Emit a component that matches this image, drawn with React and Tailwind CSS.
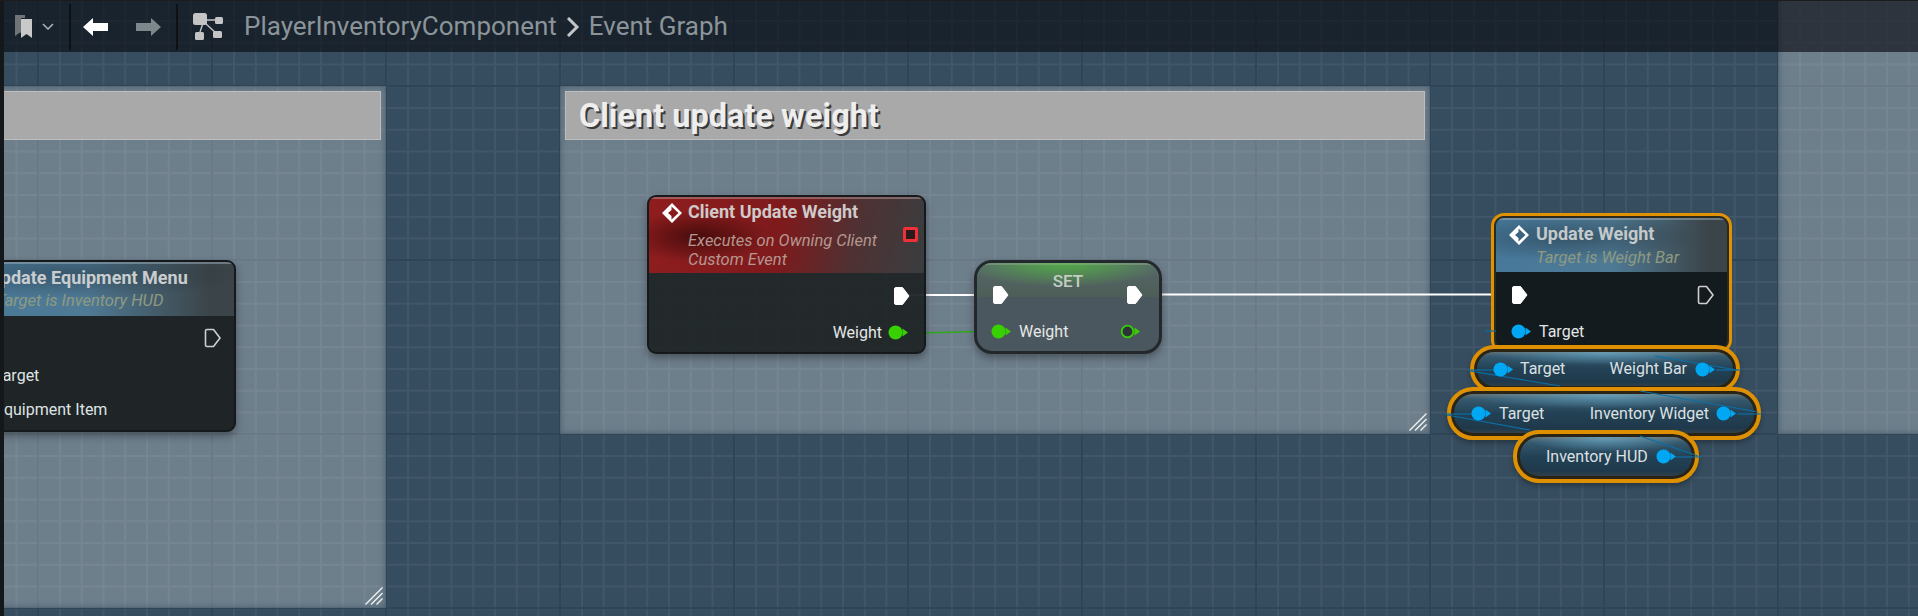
import React from 'react';

// Blueprint graph editor: toolbar over a free canvas of comment boxes and nodes

function ExecPin({ hollow = false }) {
    return (
        <svg width="17" height="20" viewBox="0 0 17 20" className="shrink-0 relative z-[6]">
            <path
                d="M3 1.5H9.500L16 10L9.500 18.5H3Q1.5 18.5 1.5 17V3Q1.5 1.5 3 1.5Z"
                fill={hollow ? 'none' : '#ffffff'}
                stroke={hollow ? '#cfcfcf' : '#ffffff'}
                strokeWidth={hollow ? 1.6 : 1}
                strokeLinejoin="round"
            />
        </svg>
    );
}

function DataPin({ color = '#00a8f4', hollow = false }) {
    return (
        <svg width="21" height="15" viewBox="0 0 21 15" className="shrink-0 relative z-[6]">
            <polygon points="14.5,3.5 20,7.5 14.5,11.5" fill={color} />
            <circle
                cx="7.5"
                cy="7.5"
                r={hollow ? 5.8 : 7}
                fill={hollow ? '#2c3438' : color}
                stroke={color}
                strokeWidth={hollow ? 1.8 : 0}
            />
        </svg>
    );
}

function FunctionIcon() {
    return (
        <svg width="20" height="20" viewBox="0 0 20 20" className="shrink-0">
            <path
                fillRule="evenodd"
                d="M10 0L20 10L10 20L0 10ZM9.500 3.500L16.500 10L9.500 16.500L9.500 13L6 10L9.500 7Z"
                fill="#ffffff"
            />
        </svg>
    );
}

function ResizeGrip({ className }) {
    return (
        <svg width="18" height="18" viewBox="0 0 18 18" className={className}>
            <path d="M0.5 17.5L17.5 0.5M6 17.5L17.5 6M11.5 17.5L17.5 11.5" stroke="#ffffff" strokeWidth="1.4" opacity="0.9" />
        </svg>
    );
}

function CommentBox({ className, title }) {
    return (
        <div className={`absolute bg-white/28 shadow-[inset_0_0_7px_rgba(53,76,94,0.75)] ${className}`}>
            {title !== undefined && (
                <div className="mx-[5px] mt-[5px] h-[49px] flex items-center pl-[13px] bg-[#a9a9a9] border border-[#bdbdbd] text-[32.5px] font-bold text-[#eeeeee] [text-shadow:2px_2px_0_#3a3a3a]">
                    <span className="pt-[2px]">{title}</span>
                </div>
            )}
        </div>
    );
}

function Wires() {
    return (
        <svg width="1918" height="616" className="absolute left-0 top-0">
            <path d="M905 295H994" stroke="#ffffff" strokeWidth="2.2" fill="none" />
            <path d="M1140 294.5H1514" stroke="#ffffff" strokeWidth="2.2" fill="none" />
            <path d="M905 333.5L994 331" stroke="#2fa81a" strokeWidth="1.5" fill="none" />
        </svg>
    );
}

function BlueWires() {
    return (
        <svg width="1918" height="616" className="absolute left-0 top-0 z-[5]">
            <g stroke="#0a6fa6" strokeWidth="1.2" fill="none">
                <path d="M1485 331H1496" />
                <path d="M1468 370H1494" />
                <path d="M1470 371L1560 386" />
                <path d="M1716 370H1741" />
                <path d="M1655 356L1737 370" />
                <path d="M1445 414H1472" />
                <path d="M1447 415L1530 430" />
                <path d="M1737 414H1762" />
                <path d="M1640 391L1758 412" />
                <path d="M1676 457H1702" />
                <path d="M1640 436L1698 456" />
            </g>
        </svg>
    );
}

function Toolbar() {
    return (
        <div className="relative z-10 h-[52px] flex items-center border-t border-[#1c1c1c] bg-[rgba(10,13,20,0.65)] pl-[15px]">
            <svg width="17" height="23" viewBox="0 0 17 23" className="shrink-0">
                <path d="M0 0H10V3H6V18L5 17.500L0 21Z" fill="#6e7477" />
                <path d="M6 4H17V23L11.500 19L6 23Z" fill="#c9c9c9" />
            </svg>
            <svg width="12" height="7" viewBox="0 0 12 7" className="shrink-0 ml-[10px]">
                <path d="M1 1L6 6L11 1" stroke="#a8aeb1" strokeWidth="1.6" fill="none" />
            </svg>
            <div className="ml-[15px] w-[2px] h-[46px] bg-[#0d1114]" />
            <svg width="25" height="18" viewBox="0 0 25 18" className="shrink-0 ml-[12px]">
                <path d="M0 9L10 0V5H25V13H10V18Z" fill="#ffffff" />
            </svg>
            <svg width="25" height="18" viewBox="0 0 25 18" className="shrink-0 ml-[28px]">
                <path d="M25 9L15 0V5H0V13H15V18Z" fill="#7d888c" />
            </svg>
            <div className="ml-[15px] w-[2px] h-[46px] bg-[#0d1114]" />
            <svg width="30" height="27" viewBox="0 0 30 27" className="shrink-0 ml-[15px]">
                <path d="M10 7H26M10 10L6 22M12 10L24 21" stroke="#c4c4c4" strokeWidth="1.4" fill="none" />
                <rect x="0" y="0" width="14" height="12" rx="2.5" fill="#c4c4c4" />
                <rect x="22" y="4" width="8" height="7" rx="1.500" fill="#c4c4c4" />
                <rect x="2" y="19" width="9" height="8" rx="1.500" fill="#c4c4c4" />
                <rect x="20" y="18" width="9" height="7" rx="1.500" fill="#c4c4c4" />
            </svg>
            <span className="ml-[21px] text-[26px] text-[#8b9499]">PlayerInventoryComponent</span>
            <svg width="15" height="20" viewBox="0 0 15 20" className="shrink-0 ml-[8px]">
                <path d="M3 1L12 10L3 19" stroke="#c2c6c8" strokeWidth="3" fill="none" />
            </svg>
            <span className="ml-[9px] text-[26px] text-[#8b9499]">Event Graph</span>
        </div>
    );
}

function EquipmentNode() {
    return (
        <div className="absolute left-[-62px] top-[260px] w-[298px] h-[172px] rounded-[9px] border-2 border-[#15191b] bg-[#1f2526] shadow-[0_4px_8px_rgba(0,0,0,0.35)] overflow-hidden">
            <div className="h-[54px] pl-[49px] bg-[radial-gradient(ellipse_170px_26px_at_45%_22%,rgba(0,0,0,0.28),transparent),linear-gradient(90deg,#47789a,#4f7a95_50%,#3b4448_92%)] shadow-[inset_0_2px_0_rgba(160,175,185,0.5)]">
                <div className="pt-[4px] text-[18px] leading-[24px] font-bold text-[#c9cdcf]">Update Equipment Menu</div>
                <div className="pl-[7px] text-[16.5px] leading-[21px] italic text-[#8e9a80]">Target is Inventory HUD</div>
            </div>
            <div className="flex justify-end pr-[13px] pt-[12px]">
                <ExecPin hollow />
            </div>
            <div className="pl-[54px] pt-[17px] text-[16px] leading-[21px] text-[#dfe3e5]">Target</div>
            <div className="pl-[55px] pt-[13px] text-[16px] leading-[21px] text-[#dfe3e5]">Equipment Item</div>
        </div>
    );
}

function ClientEventNode() {
    return (
        <div className="absolute left-[647px] top-[195px] w-[279px] h-[159px] rounded-[9px] border-2 border-[#15191b] bg-[#1f2526]/95 shadow-[0_4px_8px_rgba(0,0,0,0.35)] overflow-hidden">
            <div className="relative h-[76px] pl-[39px] bg-[radial-gradient(ellipse_70px_26px_at_18%_52%,rgba(30,0,0,0.6),transparent),linear-gradient(100deg,#8f1d1e,#7e1a1c_48%,#4f3133_74%,#393d3f)] shadow-[inset_0_2px_0_rgba(190,150,150,0.5)]">
                <div className="absolute left-[13px] top-[6px]">
                    <FunctionIcon />
                </div>
                <div className="pt-[3px] text-[18px] leading-[24px] font-bold text-[#cfcaca]">Client Update Weight</div>
                <div className="pt-[7px] text-[16.5px] leading-[19px] italic text-[#b4978f]">Executes on Owning Client</div>
                <div className="text-[16.5px] leading-[20px] italic text-[#b4978f]">Custom Event</div>
                <div className="absolute left-[254px] top-[30px] w-[15px] h-[15px] rounded-[2px] border-[3px] border-[#ef3038] bg-[#2a1a1c]" />
            </div>
            <div className="flex justify-end pr-[14px] pt-[13px]">
                <ExecPin />
            </div>
            <div className="flex justify-end items-center gap-[6px] pr-[15px] pt-[16px] text-[16px] leading-[21px] text-[#e6e8e8]">
                Weight
                <DataPin color="#38d000" />
            </div>
        </div>
    );
}

function SetNode() {
    return (
        <div className="absolute left-[974px] top-[260px] w-[188px] h-[94px] rounded-[18px] border-[3px] border-[#22282b] bg-[#4a575e] shadow-[0_4px_8px_rgba(0,0,0,0.35)] overflow-hidden">
            <div className="h-[34px] flex items-start justify-center bg-[radial-gradient(ellipse_105px_24px_at_48%_0%,rgba(80,190,60,0.8),transparent),linear-gradient(180deg,#59666c,#4c5e56)] shadow-[inset_0_2px_0_rgba(170,180,170,0.35)]">
                <span className="pt-[8px] text-[17px] leading-[20px] font-medium text-[#c3cdc3]">SET</span>
            </div>
            <div className="absolute left-[15px] top-[22px]">
                <ExecPin />
            </div>
            <div className="absolute right-[16px] top-[22px]">
                <ExecPin />
            </div>
            <div className="flex items-center gap-[7px] pl-[14px] pt-[24px] text-[16px] leading-[21px] text-[#e6e8e8]">
                <DataPin color="#38d000" />
                Weight
                <div className="ml-auto mr-[18px]">
                    <DataPin color="#38d000" hollow />
                </div>
            </div>
        </div>
    );
}

function UpdateWeightNode() {
    return (
        <div className="absolute left-[1491px] top-[213px] w-[241px] h-[140px] rounded-[13px] border-[3px] border-[#e09200]">
            <div className="h-full rounded-[10px] border-2 border-[#2b2a1c] bg-[#141b1e] overflow-hidden">
                <div className="relative h-[54px] pl-[40px] bg-[radial-gradient(ellipse_130px_24px_at_32%_36%,rgba(0,0,0,0.3),transparent),linear-gradient(90deg,#47789a,#4f7a95_50%,#3b4448_92%)] shadow-[inset_0_2px_0_rgba(160,175,185,0.5)]">
                    <div className="absolute left-[13px] top-[7px]">
                        <FunctionIcon />
                    </div>
                    <div className="pt-[4px] text-[18px] leading-[24px] font-bold text-[#c4c9cb]">Update Weight</div>
                    <div className="pt-[2px] text-[16.5px] leading-[20px] italic text-[#8e9a80]">Target is Weight Bar</div>
                </div>
                <div className="flex justify-between pl-[15px] pr-[13px] pt-[13px]">
                    <ExecPin />
                    <ExecPin hollow />
                </div>
                <div className="flex items-center gap-[7px] pl-[15px] pt-[16px] text-[16px] leading-[21px] text-[#e2e5e6]">
                    <DataPin />
                    Target
                </div>
            </div>
        </div>
    );
}

function PillNode({ className, children }) {
    return (
        <div
            className={`absolute flex items-center whitespace-nowrap rounded-[26px] border-[4px] border-[#df9000] text-[16px] text-[#dde1e3] bg-[radial-gradient(ellipse_45%_30%_at_50%_10%,rgba(110,175,205,0.7),transparent),linear-gradient(180deg,#7d7c74_0%,#35596e_18%,#234155_50%,#1f394b_82%,#39454b_100%)] shadow-[inset_0_0_0_3px_#2b2414,0_3px_5px_rgba(0,0,0,0.3)] ${className}`}
        >
            {children}
        </div>
    );
}

function PillText({ className, children }) {
    return <span className={`relative z-[6] ${className}`}>{children}</span>;
}

export default function App() {
    return (
        <div className="relative w-full h-[616px] overflow-hidden font-['Roboto',sans-serif] bg-[#364d5f] bg-[linear-gradient(90deg,#2f4557_2px,transparent_2px),linear-gradient(180deg,#2f4557_2px,transparent_2px),linear-gradient(90deg,#415668_2px,transparent_2px),linear-gradient(180deg,#415668_2px,transparent_2px)] bg-[size:174px_174px,174px_174px,21.75px_21.75px,21.75px_21.75px] bg-[position:37px_0,0_85px,15.5px_0,0_20px]">
            <CommentBox className="left-[-40px] top-[86px] w-[426px] h-[522px]" title="" />
            <CommentBox className="left-[560px] top-[86px] w-[870px] h-[348px]" title="Client update weight" />
            <CommentBox className="left-[1778px] top-[-60px] w-[300px] h-[494px]" />
            <ResizeGrip className="absolute left-[365px] top-[587px]" />
            <ResizeGrip className="absolute left-[1409px] top-[413px]" />

            <Toolbar />
            <Wires />

            <EquipmentNode />
            <ClientEventNode />
            <SetNode />
            <UpdateWeightNode />

            <PillNode className="left-[1470px] top-[345px] w-[270px] h-[48px] pl-[19px] pr-[20px]">
                <DataPin />
                <PillText className="ml-[6px]">Target</PillText>
                <PillText className="ml-auto mr-[8px]">Weight Bar</PillText>
                <DataPin />
            </PillNode>
            <PillNode className="left-[1447px] top-[387px] w-[314px] h-[53px] pl-[20px] pr-[20px]">
                <DataPin />
                <PillText className="ml-[7px]">Target</PillText>
                <PillText className="ml-auto mr-[7px]">Inventory Widget</PillText>
                <DataPin />
            </PillNode>
            <PillNode className="left-[1513px] top-[430px] w-[186px] h-[53px] pl-[29px] pr-[19px]">
                <PillText className="ml-auto mr-[8px]">Inventory HUD</PillText>
                <DataPin />
            </PillNode>
            <BlueWires />

            <div className="absolute left-0 top-0 z-20 w-[4px] h-full bg-[#14181a]" />
            <div className="absolute left-0 top-0 z-20 w-full h-[1px] bg-[#1c1c1c]" />
        </div>
    );
}
